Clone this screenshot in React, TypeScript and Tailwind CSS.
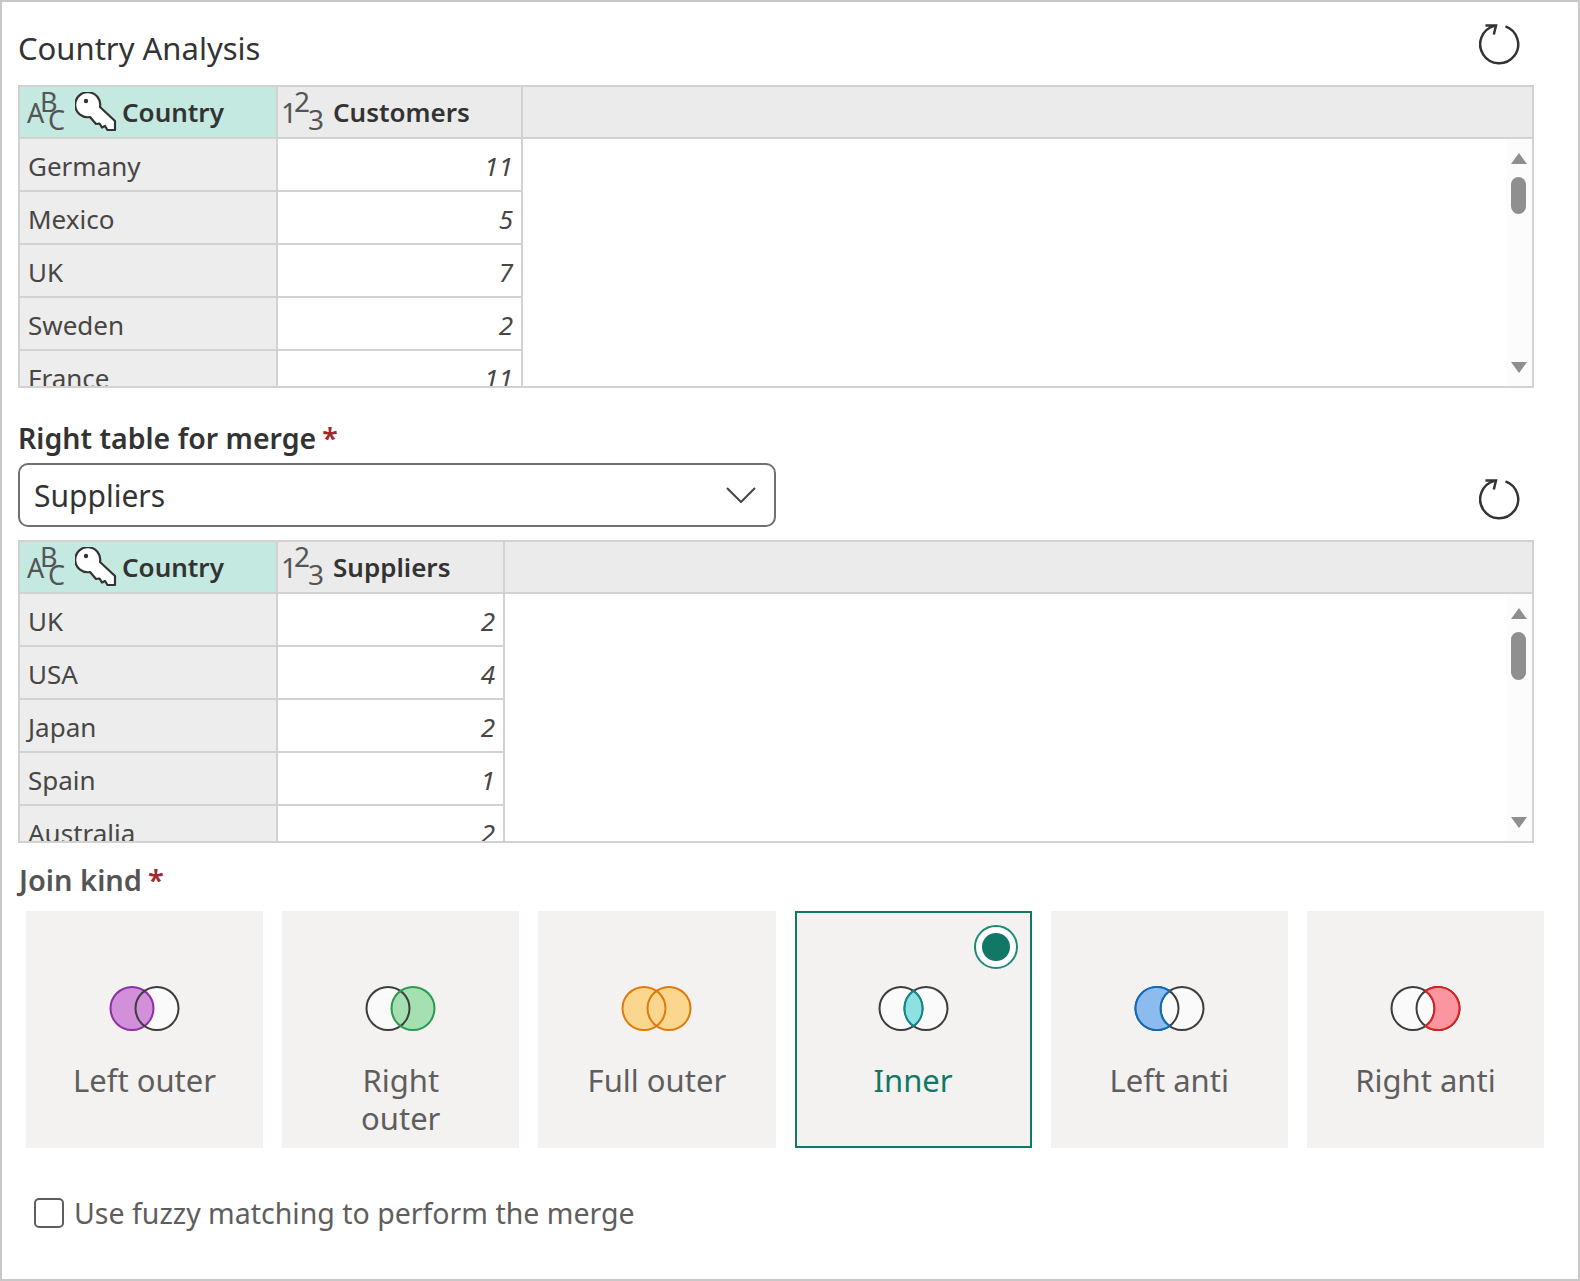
const FONT = "font-['Noto_Sans','Open_Sans',sans-serif]";

const customers: [string, number][] = [
  ["Germany", 11],
  ["Mexico", 5],
  ["UK", 7],
  ["Sweden", 2],
  ["France", 11],
];

const suppliers: [string, number][] = [
  ["UK", 2],
  ["USA", 4],
  ["Japan", 2],
  ["Spain", 1],
  ["Australia", 2],
];

const LENS = "M35 5A21.5 21.5 0 0 1 35 40A21.5 21.5 0 0 1 35 5Z";
const LEFT_CRESCENT = "M35 5A21.5 21.5 0 1 0 35 40A21.5 21.5 0 0 1 35 5Z";
const RIGHT_CRESCENT = "M35 5A21.5 21.5 0 1 1 35 40A21.5 21.5 0 0 0 35 5Z";

type Join = {
  label: string;
  fill: string;
  stroke: string;
  left?: boolean;
  right?: boolean;
  path?: string;
  selected?: boolean;
};

const joins: Join[] = [
  { label: "Left outer", fill: "#d28fda", stroke: "#8e2fa3", left: true },
  { label: "Right outer", fill: "#a5e0b0", stroke: "#2b9a53", right: true },
  { label: "Full outer", fill: "#fad68f", stroke: "#e07a0c", left: true, right: true },
  { label: "Inner", fill: "#8fe0e0", stroke: "#0c8a8e", path: LENS, selected: true },
  { label: "Left anti", fill: "#8cbcee", stroke: "#0f6cbd", path: LEFT_CRESCENT },
  { label: "Right anti", fill: "#fb96a0", stroke: "#d92121", path: RIGHT_CRESCENT },
];

function Venn({ join }: { join: Join }) {
  const idle = "#3d3d3d";
  return (
    <svg width="71" height="45" viewBox="0 0 70 45" fill="none" strokeWidth="2">
      <circle cx="22.5" cy="22.5" r="21.5" fill={join.left ? join.fill : "#fafafa"} />
      <circle cx="47.5" cy="22.5" r="21.5" fill={join.right ? join.fill : join.left ? "none" : "#fafafa"} />
      {!join.left && <path d={LENS} fill={join.right ? join.fill : "#fafafa"} />}
      {join.left && !join.right && <path d="M47.5 1A21.5 21.5 0 0 1 47.5 44A21.5 21.5 0 0 1 35 40A21.5 21.5 0 0 0 35 5A21.5 21.5 0 0 1 47.5 1Z" fill="#fafafa" />}
      <circle cx="22.5" cy="22.5" r="21.5" stroke={join.left ? join.stroke : idle} />
      <circle cx="47.5" cy="22.5" r="21.5" stroke={join.right ? join.stroke : idle} />
      {join.path && <path d={join.path} fill={join.fill} stroke={join.stroke} />}
    </svg>
  );
}

function RefreshIcon() {
  return (
    <svg width="42" height="42" viewBox="0 0 42 42" fill="none" stroke="#333" strokeWidth="2.5">
      <path d="M26.5 3.4A19 19 0 1 1 15.5 2.9" />
      <path d="M6.5 2.5H17L14.8 11.5" />
    </svg>
  );
}

function KeyIcon() {
  return (
    <svg width="42" height="40" viewBox="0 0 42 40" fill="#fff" stroke="#333" strokeWidth="2.2" strokeLinejoin="round" className="shrink-0">
      <path d="M15 25A12.5 12.5 0 1 1 25 15L40 29V38H32.5L30 34L27 35.5L24.5 31.5L21 32Z" />
      <circle cx="11" cy="9" r="2.2" fill="#333" stroke="none" />
    </svg>
  );
}

function AbcIcon() {
  return (
    <svg width="42" height="42" viewBox="0 0 42 42" fill="#555" fontSize="27" className="shrink-0 overflow-visible">
      <text x="0" y="32">A</text>
      <text x="13" y="21">B</text>
      <text x="21" y="39">C</text>
    </svg>
  );
}

function NumIcon() {
  return (
    <svg width="46" height="42" viewBox="0 0 46 42" fill="#555" fontSize="28" className="shrink-0 overflow-visible">
      <text x="0" y="32">1</text>
      <text x="13" y="21">2</text>
      <text x="27" y="39">3</text>
    </svg>
  );
}

function Scrollbar({ thumb }: { thumb: string }) {
  return (
    <div className="flex w-[26px] shrink-0 flex-col items-center bg-[#fcfcfc] pr-[1px] pt-[14px] pb-[13px]">
      <svg width="16" height="11" viewBox="0 0 16 11" fill="#8f8f8f">
        <path d="M8 0L16 11H0Z" />
      </svg>
      <div className={`mt-[13px] w-[15px] rounded-full bg-[#8f8f8f] ${thumb}`} />
      <svg width="16" height="11" viewBox="0 0 16 11" fill="#8f8f8f" className="mt-auto">
        <path d="M8 11L16 0H0Z" />
      </svg>
    </div>
  );
}

function DataTable({ column, rows, width, thumb }: { column: string; rows: [string, number][]; width: string; thumb: string }) {
  return (
    <div className="flex h-[303px] w-[1516px] flex-col overflow-hidden border-2 border-[#d2d2d2]">
      <div className="flex h-[52px] shrink-0 border-b-2 border-[#d2d2d2] bg-[#ebebeb]">
        <div className="flex w-[258px] shrink-0 items-center border-r-2 border-[#d2d2d2] bg-[#c3e9e1] pl-[7px]">
          <AbcIcon />
          <div className="ml-[6px]">
            <KeyIcon />
          </div>
          <span className="ml-[5px] text-[26px] font-semibold leading-none text-[#333]">Country</span>
        </div>
        <div className={`flex shrink-0 items-center border-r-2 border-[#d2d2d2] pl-[3px] ${width}`}>
          <NumIcon />
          <span className="ml-[6px] text-[26px] font-semibold leading-none text-[#333]">{column}</span>
        </div>
      </div>
      <div className="flex min-h-0 flex-1">
        <div className="shrink-0">
          {rows.map(([name, value]) => (
            <div key={name} className="flex h-[53px]">
              <div className="flex w-[258px] shrink-0 items-center border-r-2 border-b-2 border-[#d2d2d2] bg-[#ededed] pl-[8px] pt-[4px] text-[26px] text-[#484644]">
                {name}
              </div>
              <div className={`flex shrink-0 items-center justify-end border-r-2 border-b-2 border-[#d2d2d2] pr-[8px] pt-[4px] text-[26px] italic text-[#484644] ${width}`}>
                {value}
              </div>
            </div>
          ))}
        </div>
        <div className="flex-1" />
        <Scrollbar thumb={thumb} />
      </div>
    </div>
  );
}

function Required() {
  return <span className="ml-[6px] text-[#a4262c]">*</span>;
}

export default function App() {
  return (
    <div className={`h-[1281px] w-[1580px] border-2 border-[#c8c8c8] bg-white pl-[16px] ${FONT}`}>
      <div className="flex h-[83px] w-[1515px] items-start justify-between">
        <h1 className="mt-[26px] text-[31px] font-normal leading-[40px] text-[#333]">Country Analysis</h1>
        <div className="mt-[21px] mr-[12px]">
          <RefreshIcon />
        </div>
      </div>

      <DataTable column="Customers" rows={customers} width="w-[245px]" thumb="h-[37px]" />

      <div className="mt-[32px] text-[28.5px] font-semibold leading-[36px] text-[#333]">
        Right table for merge
        <Required />
      </div>
      <div className="mt-[7px] flex h-[64px] w-[1515px] items-start justify-between">
        <div className="flex h-[64px] w-[758px] items-center justify-between rounded-[10px] border-2 border-[#707070] pl-[14px] pr-[18px] text-[30px] text-[#333]">
          Suppliers
          <svg width="30" height="16" viewBox="0 0 30 16" fill="none" stroke="#444" strokeWidth="2">
            <path d="M1 1L15 15L29 1" />
          </svg>
        </div>
        <div className="mt-[15px] mr-[12px]">
          <RefreshIcon />
        </div>
      </div>

      <div className="mt-[13px]">
        <DataTable column="Suppliers" rows={suppliers} width="w-[227px]" thumb="h-[48px]" />
      </div>

      <div className="mt-[19px] ml-[1px] text-[29px] font-semibold leading-[36px] text-[#555]">
        Join kind
        <Required />
      </div>

      <div className="mt-[13px] ml-[8px] grid w-[1518px] grid-cols-6 gap-[19px]">
        {joins.map((join) => (
          <div
            key={join.label}
            className={`relative flex h-[237px] flex-col items-center bg-[#f3f2f1] px-[40px] ${join.selected ? "border-2 border-[#117865] pt-[73px]" : "pt-[75px]"}`}
          >
            {join.selected && (
              <div className="absolute top-[12px] right-[12px] flex h-[44px] w-[44px] items-center justify-center rounded-full border-2 border-[#1a8a74] bg-white">
                <div className="h-[28px] w-[28px] rounded-full bg-[#117865]" />
              </div>
            )}
            <Venn join={join} />
            <div className={`mt-[30px] text-center text-[31px] leading-[38px] ${join.selected ? "text-[#117865]" : "text-[#605e5c]"}`}>
              {join.label}
            </div>
          </div>
        ))}
      </div>

      <div className="mt-[50px] ml-[16px] flex items-center gap-[10px]">
        <div className="h-[30px] w-[30px] rounded-[5px] border-2 border-[#605e5c]" />
        <span className="text-[28.5px] leading-[30px] text-[#605e5c]">Use fuzzy matching to perform the merge</span>
      </div>
    </div>
  );
}
